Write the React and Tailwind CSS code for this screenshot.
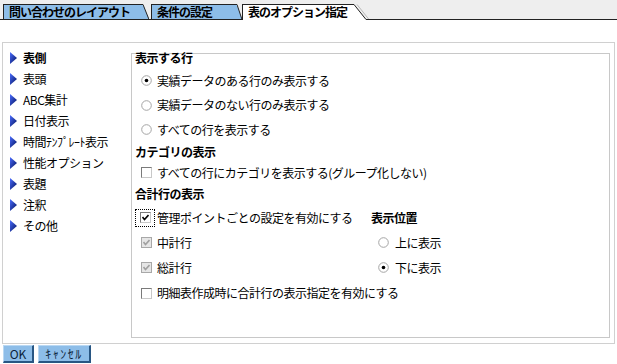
import React from 'react'

const TAB_BLUE = '#8dbde8'

// Small blue nav arrow
const NavArrow = () => (
  <svg width="7" height="12" viewBox="0 0 7 12" className="shrink-0">
    <defs>
      <linearGradient id="navArrowGrad" x1="0" y1="0" x2="1" y2="1">
        <stop offset="0" stopColor="#4a6cff" />
        <stop offset="1" stopColor="#00105a" />
      </linearGradient>
    </defs>
    <polygon points="0,0 7,6 0,12" fill="url(#navArrowGrad)" />
  </svg>
)

const Radio = ({ checked }) => (
  <svg width="11" height="11" viewBox="0 0 11 11" className="shrink-0">
    <circle cx="5.5" cy="5.5" r="4.8" fill="#fff" stroke="#a4a4a4" strokeWidth="1" />
    {checked && <circle cx="5.5" cy="5.5" r="1.8" fill="#000" />}
  </svg>
)

const Checkbox = ({ checked, disabled }) => (
  <span
    className={
      disabled
        ? 'w-[11px] h-[11px] shrink-0 flex items-center justify-center border border-[#a8a8a8] bg-[#e6e6e6]'
        : 'w-[11px] h-[11px] shrink-0 flex items-center justify-center border border-t-[#7a7a7a] border-l-[#7a7a7a] border-b-[#c8c8c8] border-r-[#c8c8c8] bg-white'
    }
  >
    {checked && (
      <svg width="7" height="7" viewBox="0 0 7 7">
        <polyline points="0.5,3 2.5,5.5 6.5,1" fill="none" stroke={disabled ? '#a0a0a0' : '#000'} strokeWidth="1.6" />
      </svg>
    )}
  </span>
)

const Tab = ({ label, active, width, tail }) => (
  <div className="flex items-start h-[16px]">
    <div
      className={
        active
          ? 'h-[16px] border-t border-l border-[#222] bg-white pl-[5px] font-bold leading-[14px] tracking-[-1px] whitespace-nowrap'
          : 'h-[16px] border-t border-l border-b border-[#222] bg-[#8dbde8] pl-[5px] font-bold leading-[13px] tracking-[-1px] whitespace-nowrap'
      }
      style={{ width }}
    >
      {label}
    </div>
    {active ? (
      <svg width={tail} height="16" className="shrink-0">
        <polygon points={`0,1 ${tail - 3},16 0,16`} fill="#fff" />
        <line x1="0" y1="0.5" x2={tail - 3} y2="15.5" stroke="#222" />
        <line x1="3" y1="0.5" x2={tail} y2="15.5" stroke="#b8b8b8" />
        <line x1={tail - 3} y1="15.5" x2={tail} y2="15.5" stroke="#222" />
      </svg>
    ) : (
      <svg width={tail} height="16" className="shrink-0">
        <polygon points={`0,1 ${tail},15 0,15`} fill={TAB_BLUE} />
        <line x1="0" y1="0.5" x2={tail} y2="15.5" stroke="#222" />
        <line x1="0" y1="15.5" x2={tail} y2="15.5" stroke="#222" />
      </svg>
    )}
  </div>
)

const navItems = ['表側', '表頭', 'ABC集計', '日付表示', '時間ﾃﾝﾌﾟﾚｰﾄ表示', '性能オプション', '表題', '注釈', 'その他']

export default function App() {
  return (
    <div className="w-[617px] h-[364px] bg-white overflow-hidden text-[12px] leading-[14px] tracking-[-0.5px] text-black font-['Noto_Sans_CJK_JP','Noto_Sans',sans-serif]">
      {/* Tab bar */}
      <div className="h-[20px] bg-[#eeeeee] flex items-end">
        <div className="w-[3px] h-[1px] bg-[#222]" />
        <Tab label="問い合わせのレイアウト" width={140} tail={6} />
        <div className="w-[2px] h-[1px] bg-[#222]" />
        <Tab label="条件の設定" width={86} tail={5} />
        <Tab label="表のオプション指定" active width={112} tail={15} />
        <div className="flex-1 h-[1px] bg-[#222]" />
      </div>

      {/* Option panel */}
      <div className="mt-[22px] ml-[2px] w-[613px] h-[302px] border border-[#d0d0d0] flex">
        <div className="w-[128px] pt-[4px] flex flex-col">
          {navItems.map((item, i) => (
            <div key={item} className="h-[21px] flex items-center pl-[7px] gap-[6px] whitespace-nowrap">
              <NavArrow />
              <span className={i === 0 ? 'font-bold' : ''}>{item}</span>
            </div>
          ))}
        </div>

        <div className="mt-[10px] w-[479px] h-[285px] border border-[#c8c8c8] flex flex-col whitespace-nowrap">
          <div className="h-[22px] -mt-[7px] flex items-center pl-[3px] font-bold">表示する行</div>
          <div className="h-[23px] flex items-center pl-[9px] gap-[5px]">
            <Radio checked />
            <span>実績データのある行のみ表示する</span>
          </div>
          <div className="h-[26px] flex items-center pl-[9px] gap-[5px]">
            <Radio />
            <span>実績データのない行のみ表示する</span>
          </div>
          <div className="h-[23px] flex items-center pl-[9px] gap-[5px]">
            <Radio />
            <span>すべての行を表示する</span>
          </div>
          <div className="h-[21px] flex items-center pl-[3px] font-bold">カテゴリの表示</div>
          <div className="h-[21px] flex items-center pl-[9px] gap-[5px]">
            <Checkbox />
            <span>すべての行にカテゴリを表示する(グループ化しない)</span>
          </div>
          <div className="h-[22px] flex items-center pl-[3px] font-bold">合計行の表示</div>

          <div className="h-[25px] flex items-center">
            <div className="w-[239px] flex items-center pl-[3px]">
              <span className="w-[20px] h-[18px] border border-dotted border-black flex items-center pl-[4px]">
                <Checkbox checked />
              </span>
              <span className="ml-[2px]">管理ポイントごとの設定を有効にする</span>
            </div>
            <span className="font-bold">表示位置</span>
          </div>
          <div className="h-[25px] flex items-center">
            <div className="w-[246px] flex items-center pl-[9px] gap-[5px]">
              <Checkbox checked disabled />
              <span>中計行</span>
            </div>
            <div className="flex items-center gap-[6px]">
              <Radio />
              <span>上に表示</span>
            </div>
          </div>
          <div className="h-[25px] flex items-center">
            <div className="w-[246px] flex items-center pl-[9px] gap-[5px]">
              <Checkbox checked disabled />
              <span>総計行</span>
            </div>
            <div className="flex items-center gap-[6px]">
              <Radio checked />
              <span>下に表示</span>
            </div>
          </div>
          <div className="h-[26px] flex items-center pl-[9px] gap-[5px]">
            <Checkbox />
            <span>明細表作成時に合計行の表示指定を有効にする</span>
          </div>
        </div>
      </div>

      {/* Buttons */}
      <div className="mt-[1px] ml-[3px] flex gap-[4px]">
        <button className="w-[31px] h-[18px] bg-[#8dbde8] border-t border-l border-[#b9d8f3] border-r-2 border-b-2 border-r-[#285683] border-b-[#285683] flex items-center justify-center leading-[14px] tracking-normal text-[#0b1f3a]">
          OK
        </button>
        <button className="w-[53px] h-[18px] bg-[#8dbde8] border-t border-l border-[#b9d8f3] border-r-2 border-b-2 border-r-[#285683] border-b-[#285683] flex items-center justify-center leading-[14px] tracking-[1.5px] text-[#0b1f3a]">
          ｷｬﾝｾﾙ
        </button>
      </div>
    </div>
  )
}
